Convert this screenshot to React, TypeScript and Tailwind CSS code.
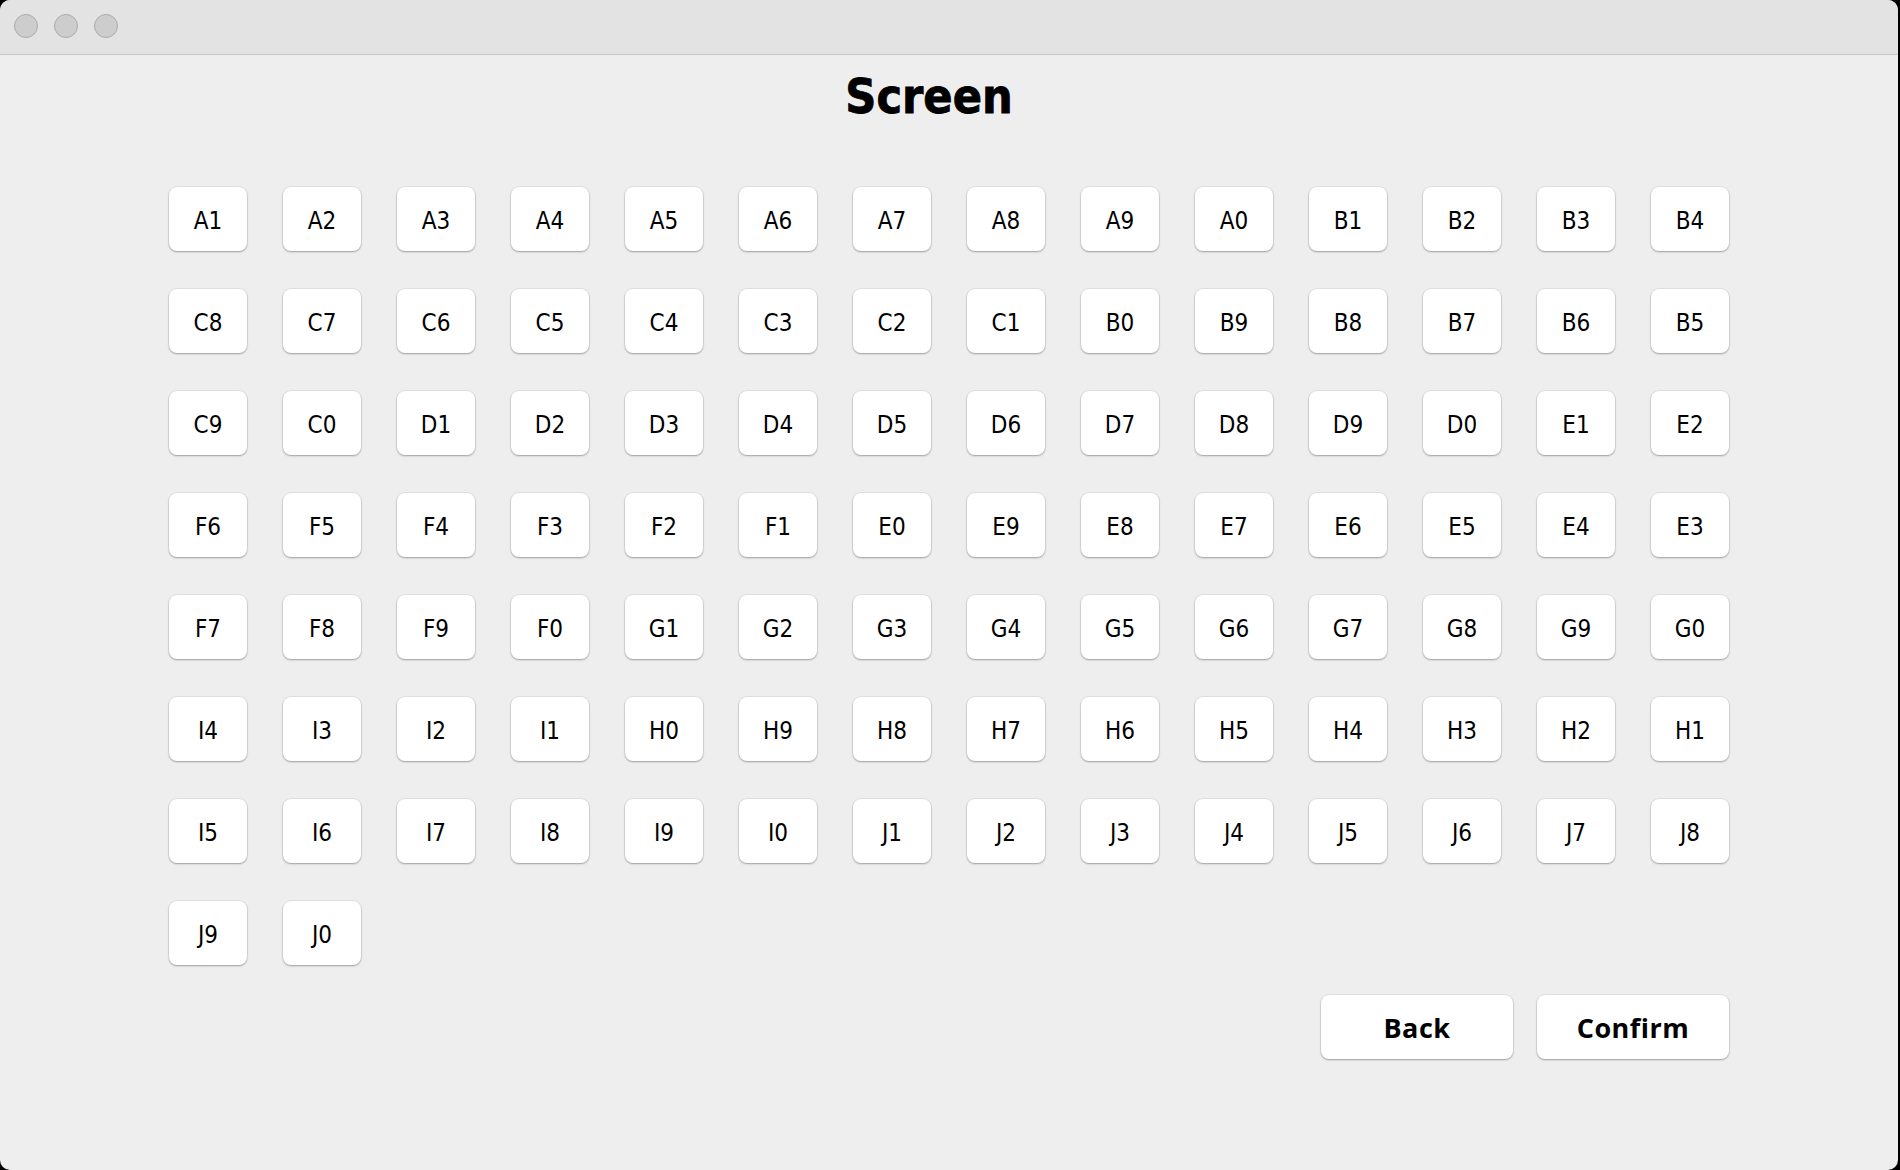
import React from "react";

const seats = [
  "A1 A2 A3 A4 A5 A6 A7 A8 A9 A0 B1 B2 B3 B4",
  "C8 C7 C6 C5 C4 C3 C2 C1 B0 B9 B8 B7 B6 B5",
  "C9 C0 D1 D2 D3 D4 D5 D6 D7 D8 D9 D0 E1 E2",
  "F6 F5 F4 F3 F2 F1 E0 E9 E8 E7 E6 E5 E4 E3",
  "F7 F8 F9 F0 G1 G2 G3 G4 G5 G6 G7 G8 G9 G0",
  "I4 I3 I2 I1 H0 H9 H8 H7 H6 H5 H4 H3 H2 H1",
  "I5 I6 I7 I8 I9 I0 J1 J2 J3 J4 J5 J6 J7 J8",
  "J9 J0",
]
  .join(" ")
  .split(" ");

const Seat = ({ label }: { label: string }) => (
  <button className="flex h-[64px] w-[78px] items-center justify-center rounded-[8px] bg-white pt-[3px] text-[24px] text-black shadow-[0_0_0_1px_rgba(0,0,0,0.05),0_1px_2px_rgba(0,0,0,0.3)] [font-family:'DejaVu_Sans_Condensed','DejaVu_Sans',sans-serif]">
    {label}
  </button>
);

const App = () => {
  return (
    <div className="h-[1170px] w-[1900px] bg-black">
      <div className="flex h-[1170px] w-[1898px] flex-col overflow-hidden rounded-[10px] bg-[#eeeeee]">
        {/* title bar */}
        <div className="flex h-[55px] items-center gap-[16px] border-b border-[#c8c8c8] bg-[#e3e3e3] pl-[14px] pb-[2px]">
          <div className="h-[24px] w-[24px] rounded-full border border-[#ababab] bg-[#cdcdcd]" />
          <div className="h-[24px] w-[24px] rounded-full border border-[#ababab] bg-[#cdcdcd]" />
          <div className="h-[24px] w-[24px] rounded-full border border-[#ababab] bg-[#cdcdcd]" />
        </div>

        <h1 className="mt-[17px] pr-[40px] text-center text-[48px] leading-[48px] font-bold text-black [-webkit-text-stroke:0.8px_black] [font-family:'DejaVu_Sans_Condensed','DejaVu_Sans',sans-serif]">
          Screen
        </h1>

        <div className="mx-auto mt-[67px] w-[1560px]">
          <div className="grid grid-cols-[repeat(14,78px)] gap-x-[36px] gap-y-[38px]">
            {seats.map((s) => (
              <Seat key={s} label={s} />
            ))}
          </div>

          <div className="mt-[30px] flex justify-end gap-[24px]">
            <button className="h-[64px] w-[192px] rounded-[8px] bg-white pt-[2px] text-[27px] font-bold tracking-[0.5px] text-black shadow-[0_0_0_1px_rgba(0,0,0,0.05),0_1px_2px_rgba(0,0,0,0.3)] [font-family:'Open_Sans',sans-serif]">
              Back
            </button>
            <button className="h-[64px] w-[192px] rounded-[8px] bg-white pt-[2px] text-[27px] font-bold tracking-[0.5px] text-black shadow-[0_0_0_1px_rgba(0,0,0,0.05),0_1px_2px_rgba(0,0,0,0.3)] [font-family:'Open_Sans',sans-serif]">
              Confirm
            </button>
          </div>
        </div>
      </div>
    </div>
  );
};

export default App;
